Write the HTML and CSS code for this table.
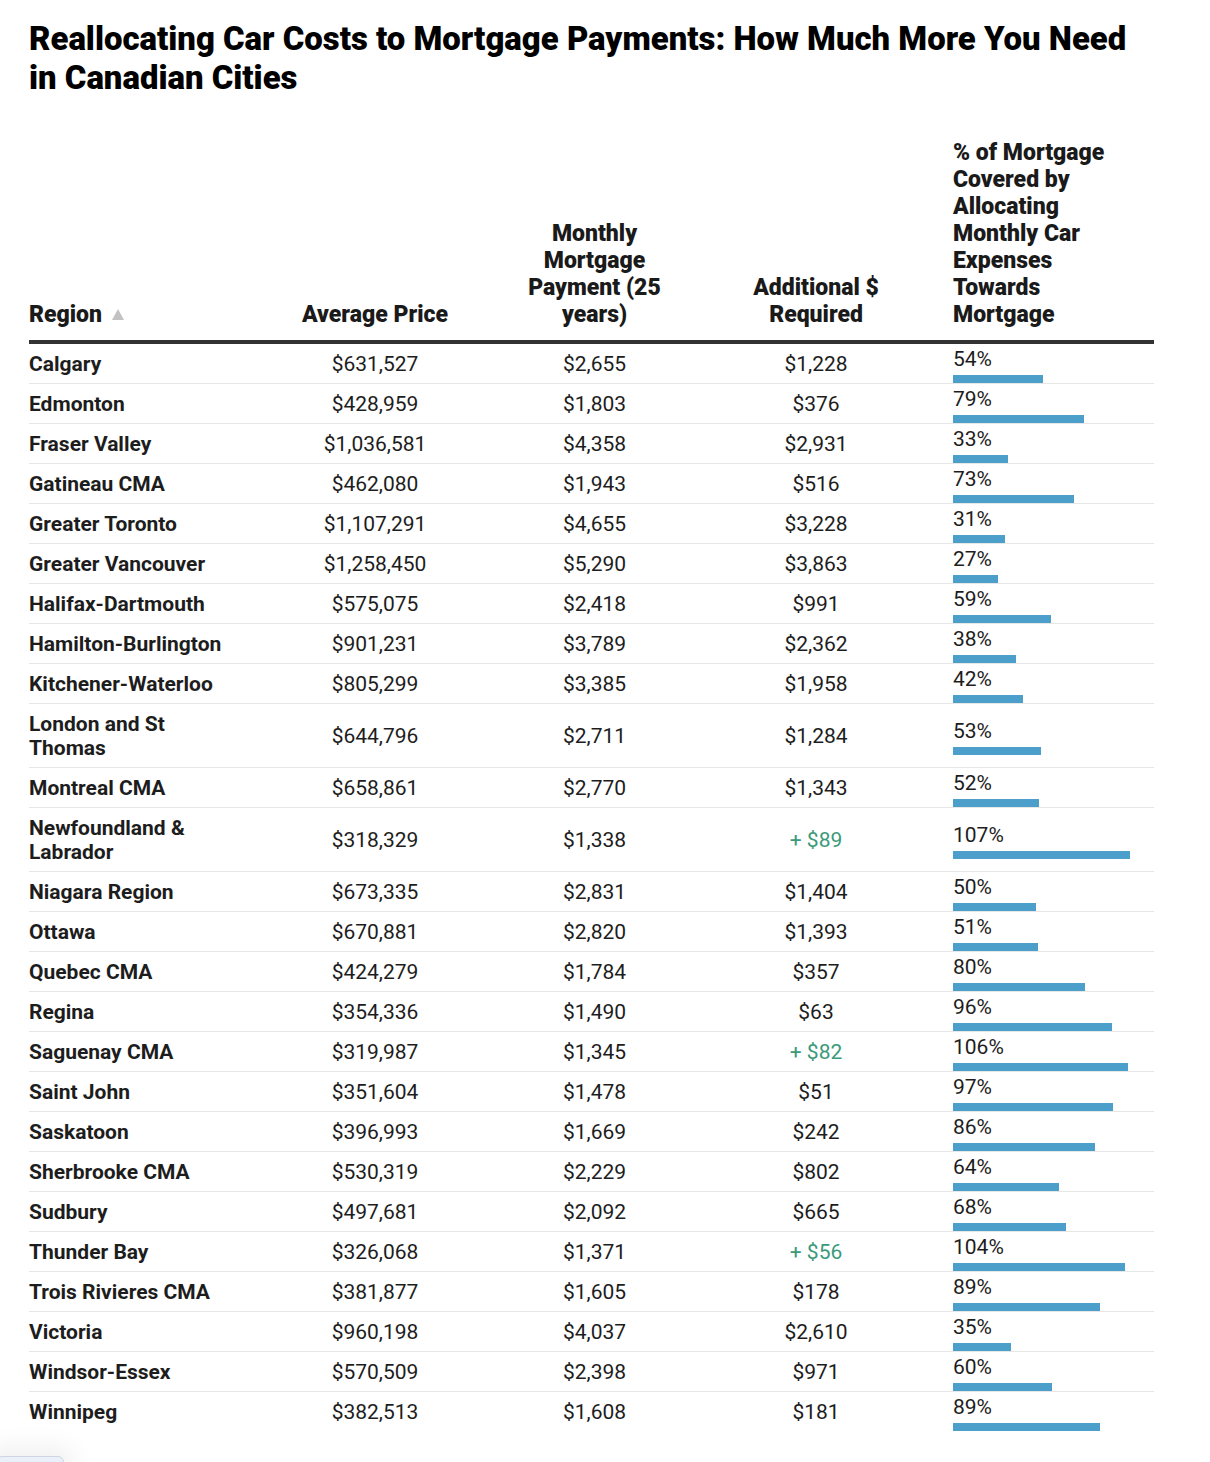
FILE: index.html
```html
<!DOCTYPE html>
<html lang="en">
<head>
<meta charset="utf-8">
<title>Reallocating Car Costs to Mortgage Payments</title>
<link rel="stylesheet" href="styles.css">
</head>
<body>
<h1 class="title">Reallocating Car Costs to Mortgage Payments: How Much More You Need in Canadian Cities</h1>
<table class="tbl">
  <colgroup>
    <col class="w-region"><col class="w-avg"><col class="w-month"><col class="w-add"><col class="w-pct">
  </colgroup>
  <thead>
    <tr>
      <th class="h-left">Region<span class="sort"></span></th>
      <th class="h-center">Average Price</th>
      <th class="h-center h-narrow">Monthly Mortgage Payment (25 years)</th>
      <th class="h-center h-narrow">Additional $ Required</th>
      <th class="h-left h-pct">% of Mortgage Covered by Allocating Monthly Car Expenses Towards Mortgage</th>
    </tr>
  </thead>
  <tbody>
    <tr><td class="name">Calgary</td><td>$631,527</td><td>$2,655</td><td>$1,228</td><td class="pct"><div class="pv">54%</div><div class="bar" style="width:90px"></div></td></tr>
    <tr><td class="name">Edmonton</td><td>$428,959</td><td>$1,803</td><td>$376</td><td class="pct"><div class="pv">79%</div><div class="bar" style="width:131px"></div></td></tr>
    <tr><td class="name">Fraser Valley</td><td>$1,036,581</td><td>$4,358</td><td>$2,931</td><td class="pct"><div class="pv">33%</div><div class="bar" style="width:55px"></div></td></tr>
    <tr><td class="name">Gatineau CMA</td><td>$462,080</td><td>$1,943</td><td>$516</td><td class="pct"><div class="pv">73%</div><div class="bar" style="width:121px"></div></td></tr>
    <tr><td class="name">Greater Toronto</td><td>$1,107,291</td><td>$4,655</td><td>$3,228</td><td class="pct"><div class="pv">31%</div><div class="bar" style="width:52px"></div></td></tr>
    <tr><td class="name">Greater Vancouver</td><td>$1,258,450</td><td>$5,290</td><td>$3,863</td><td class="pct"><div class="pv">27%</div><div class="bar" style="width:45px"></div></td></tr>
    <tr><td class="name">Halifax-Dartmouth</td><td>$575,075</td><td>$2,418</td><td>$991</td><td class="pct"><div class="pv">59%</div><div class="bar" style="width:98px"></div></td></tr>
    <tr><td class="name">Hamilton-Burlington</td><td>$901,231</td><td>$3,789</td><td>$2,362</td><td class="pct"><div class="pv">38%</div><div class="bar" style="width:63px"></div></td></tr>
    <tr><td class="name">Kitchener-Waterloo</td><td>$805,299</td><td>$3,385</td><td>$1,958</td><td class="pct"><div class="pv">42%</div><div class="bar" style="width:70px"></div></td></tr>
    <tr><td class="name">London and St Thomas</td><td>$644,796</td><td>$2,711</td><td>$1,284</td><td class="pct"><div class="pv">53%</div><div class="bar" style="width:88px"></div></td></tr>
    <tr><td class="name">Montreal CMA</td><td>$658,861</td><td>$2,770</td><td>$1,343</td><td class="pct"><div class="pv">52%</div><div class="bar" style="width:86px"></div></td></tr>
    <tr><td class="name">Newfoundland &amp; Labrador</td><td>$318,329</td><td>$1,338</td><td class="pos">+ $89</td><td class="pct"><div class="pv">107%</div><div class="bar" style="width:177px"></div></td></tr>
    <tr><td class="name">Niagara Region</td><td>$673,335</td><td>$2,831</td><td>$1,404</td><td class="pct"><div class="pv">50%</div><div class="bar" style="width:83px"></div></td></tr>
    <tr><td class="name">Ottawa</td><td>$670,881</td><td>$2,820</td><td>$1,393</td><td class="pct"><div class="pv">51%</div><div class="bar" style="width:85px"></div></td></tr>
    <tr><td class="name">Quebec CMA</td><td>$424,279</td><td>$1,784</td><td>$357</td><td class="pct"><div class="pv">80%</div><div class="bar" style="width:132px"></div></td></tr>
    <tr><td class="name">Regina</td><td>$354,336</td><td>$1,490</td><td>$63</td><td class="pct"><div class="pv">96%</div><div class="bar" style="width:159px"></div></td></tr>
    <tr><td class="name">Saguenay CMA</td><td>$319,987</td><td>$1,345</td><td class="pos">+ $82</td><td class="pct"><div class="pv">106%</div><div class="bar" style="width:175px"></div></td></tr>
    <tr><td class="name">Saint John</td><td>$351,604</td><td>$1,478</td><td>$51</td><td class="pct"><div class="pv">97%</div><div class="bar" style="width:160px"></div></td></tr>
    <tr><td class="name">Saskatoon</td><td>$396,993</td><td>$1,669</td><td>$242</td><td class="pct"><div class="pv">86%</div><div class="bar" style="width:142px"></div></td></tr>
    <tr><td class="name">Sherbrooke CMA</td><td>$530,319</td><td>$2,229</td><td>$802</td><td class="pct"><div class="pv">64%</div><div class="bar" style="width:106px"></div></td></tr>
    <tr><td class="name">Sudbury</td><td>$497,681</td><td>$2,092</td><td>$665</td><td class="pct"><div class="pv">68%</div><div class="bar" style="width:113px"></div></td></tr>
    <tr><td class="name">Thunder Bay</td><td>$326,068</td><td>$1,371</td><td class="pos">+ $56</td><td class="pct"><div class="pv">104%</div><div class="bar" style="width:172px"></div></td></tr>
    <tr><td class="name">Trois Rivieres CMA</td><td>$381,877</td><td>$1,605</td><td>$178</td><td class="pct"><div class="pv">89%</div><div class="bar" style="width:147px"></div></td></tr>
    <tr><td class="name">Victoria</td><td>$960,198</td><td>$4,037</td><td>$2,610</td><td class="pct"><div class="pv">35%</div><div class="bar" style="width:58px"></div></td></tr>
    <tr><td class="name">Windsor-Essex</td><td>$570,509</td><td>$2,398</td><td>$971</td><td class="pct"><div class="pv">60%</div><div class="bar" style="width:99px"></div></td></tr>
    <tr class="last"><td class="name">Winnipeg</td><td>$382,513</td><td>$1,608</td><td>$181</td><td class="pct"><div class="pv">89%</div><div class="bar" style="width:147px"></div></td></tr>
  </tbody>
</table>
<div class="corner"></div>
</body>
</html>
```

FILE: styles.css
```css
html, body {
  margin: 0;
  padding: 0;
  background: #ffffff;
}
body {
  font-family: Roboto, "Liberation Sans", Arial, sans-serif;
  color: #1d1d1d;
  padding: 0 29px;
  position: relative;
  min-height: 1462px;
  box-sizing: border-box;
  overflow: hidden;
}
.title {
  font-size: 32.9px;
  font-weight: 900;
  line-height: 39px;
  margin: 19px 0 0;
  color: #000;
  max-width: 1120px;
}
.tbl {
  width: 1125px;
  border-collapse: collapse;
  table-layout: fixed;
  margin-top: 42px;
}
.w-region { width: 236px; }
.w-avg { width: 220px; }
.w-month { width: 219px; }
.w-add { width: 224px; }
.w-pct { width: 226px; }

.tbl th {
  font-size: 23px;
  font-weight: 900;
  line-height: 27px;
  vertical-align: bottom;
  padding: 0 0 12px;
  border-bottom: 4px solid #333;
  color: #1a1a1a;
}
.h-left { text-align: left; }
.h-center { text-align: center; }
.h-narrow { padding-left: 35px !important; padding-right: 35px !important; }
.h-pct { padding-left: 25px !important; padding-right: 40px !important; }
.sort {
  display: inline-block;
  width: 0;
  height: 0;
  margin-left: 10px;
  border-left: 6px solid transparent;
  border-right: 6px solid transparent;
  border-bottom: 11px solid #c2c2c2;
  vertical-align: 2px;
}

.tbl td {
  font-size: 21px;
  line-height: 24px;
  padding: 8px 0 7px;
  text-align: center;
  vertical-align: middle;
  border-bottom: 1px solid #e6e6e6;
  color: #1d1d1d;
}
.tbl tr.last td { border-bottom: none; }
.tbl td.name {
  text-align: left;
  font-weight: 700;
  padding-right: 30px;
}
.tbl td.pos { color: #3b9a7a; }
.tbl td.pct {
  text-align: left;
  padding: 5px 0 0 25px;
}
.pv {
  font-size: 21px;
  line-height: 20px;
}
.bar {
  height: 8px;
  margin-top: 6px;
  background: #4b9fca;
}
.corner {
  position: absolute;
  left: -4px;
  top: 1456px;
  width: 66px;
  height: 14px;
  background: #eaf0fa;
  border: 1px solid #cfd6e2;
  border-radius: 6px;
  box-shadow: 0 0 24px 10px rgba(0, 0, 0, 0.06);
}
```
